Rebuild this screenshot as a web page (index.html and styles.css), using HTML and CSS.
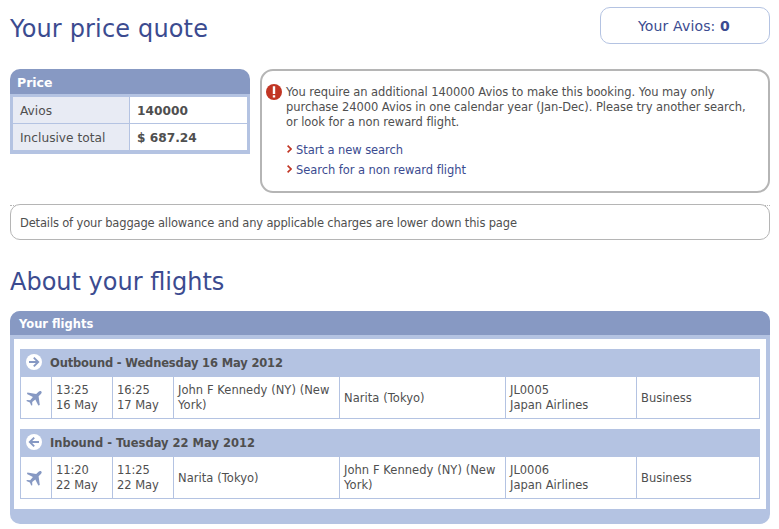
FILE: index.html
```html
<!DOCTYPE html>
<html lang="en">
<head>
<meta charset="UTF-8" />
<meta name="viewport" content="width=device-width, initial-scale=1" />
<title>Your price quote</title>
<link rel="stylesheet" href="styles.css">
</head>
<body>

<header class="page-header">
  <h1>Your price quote</h1>
  <div class="avios-balance"><span>Your Avios: <strong>0</strong></span></div>
</header>

<div class="summary">
  <section class="price-box">
    <h2 class="panel-title">Price</h2>
    <dl class="price-list">
      <dt>Avios</dt>
      <dd>140000</dd>
      <dt>Inclusive total</dt>
      <dd>$ 687.24</dd>
    </dl>
  </section>

  <section class="message-box">
    <svg class="alert-icon" width="16" height="16" viewBox="0 0 16 16">
      <circle cx="8" cy="8" r="8" fill="#c13524" />
      <path d="M6.8 2.200h2.400V10H6.800zM6.800 11.300h2.400v2.200H6.800z" fill="#fff" />
    </svg>
    <div class="message-body">
      <p>You require an additional 140000 Avios to make this booking. You may only<br>
        purchase 24000 Avios in one calendar year (Jan-Dec). Please try another search,<br>
        or look for a non reward flight.</p>
      <ul class="links">
        <li>
          <svg width="5" height="8" viewBox="0 0 5 8"><path d="M.6.6 4 4 .6 7.4" /></svg>
          <a href="#">Start a new search</a>
        </li>
        <li>
          <svg width="5" height="8" viewBox="0 0 5 8"><path d="M.6.6 4 4 .6 7.4" /></svg>
          <a href="#">Search for a non reward flight</a>
        </li>
      </ul>
    </div>
  </section>
</div>

<div class="note-wrap">
  <div class="baggage-note">Details of your baggage allowance and any applicable charges are lower down this page</div>
</div>

<h1 class="section-heading">About your flights</h1>

<section class="flights">
  <h2 class="panel-title">Your flights</h2>
  <div class="flights-body">

    <!-- Outbound -->
    <div class="flight">
      <h3 class="outbound">
        <svg width="16" height="16" viewBox="0 0 16 16">
          <circle cx="8" cy="8" r="8" fill="#fff" />
          <path class="arrow" d="M3 8h9M7.8 3.6 12.2 8l-4.400 4.400" />
        </svg>
        <span>Outbound - Wednesday 16 May 2012</span>
      </h3>
      <div class="flight-row">
        <div class="cell plane">
          <svg width="16" height="16" viewBox="0 0 16 16">
            <path d="M15.300 1.500C14.500.700 13.400 1 12.600 1.700L10.200 4 1.400 2.600 1 4.100 6.900 7 4.200 10.200.9 9.900.400 11 3.900 12.400 5.200 15.600 6.300 15.200 6.200 12 9.300 9.500 12.300 15.400 13.800 14.900 12.600 6.300 14.900 4C15.700 3.200 16 2.200 15.300 1.500z" />
          </svg>
        </div>
        <div class="cell time">13:25<br>16 May</div>
        <div class="cell time">16:25<br>17 May</div>
        <div class="cell place">John F Kennedy (NY) (New<br>York)</div>
        <div class="cell place single">Narita (Tokyo)</div>
        <div class="cell">JL0005<br>Japan Airlines</div>
        <div class="cell single">Business</div>
      </div>
    </div>

    <!-- Inbound -->
    <div class="flight">
      <h3>
        <svg width="16" height="16" viewBox="0 0 16 16">
          <circle cx="8" cy="8" r="8" fill="#fff" />
          <path class="arrow" d="M13 8H4M8.200 3.600 3.800 8l4.400 4.400" />
        </svg>
        <span>Inbound - Tuesday 22 May 2012</span>
      </h3>
      <div class="flight-row">
        <div class="cell plane">
          <svg width="16" height="16" viewBox="0 0 16 16">
            <path d="M15.300 1.500C14.500.700 13.400 1 12.600 1.700L10.200 4 1.400 2.600 1 4.100 6.900 7 4.200 10.200.9 9.900.400 11 3.900 12.400 5.200 15.600 6.300 15.200 6.200 12 9.300 9.500 12.300 15.400 13.800 14.900 12.600 6.300 14.900 4C15.700 3.200 16 2.200 15.300 1.500z" />
          </svg>
        </div>
        <div class="cell time">11:20<br>22 May</div>
        <div class="cell time">11:25<br>22 May</div>
        <div class="cell place single">Narita (Tokyo)</div>
        <div class="cell place">John F Kennedy (NY) (New<br>York)</div>
        <div class="cell">JL0006<br>Japan Airlines</div>
        <div class="cell single">Business</div>
      </div>
    </div>

  </div>
</section>

</body>
</html>
```
FILE: styles.css
```css
* {
  box-sizing: border-box;
}
body {
  margin: 0;
  padding: 7px 9px 5px 10px;
  background: #fff;
  color: #4f4f4f;
  font-family: Verdana, 'DejaVu Sans', sans-serif;
  font-size: 11.5px;
  line-height: 15px;
}
h1, h2, h3, p, ul, dl, dd {
  margin: 0;
  padding: 0;
}
h1 {
  color: #3b4b90;
  font-size: 24px;
  font-weight: 400;
  line-height: 30px;
}

/* Heading and balance */
.page-header {
  display: flex;
  justify-content: space-between;
  height: 62px;
}
.page-header h1 {
  padding-top: 7px;
  letter-spacing: 0.16px;
}
.avios-balance {
  display: flex;
  align-items: center;
  justify-content: center;
  width: 170px;
  height: 37px;
  padding: 2px 2px 0 0;
  border: 1px solid #b4c3e2;
  border-radius: 10px;
  color: #3b4b90;
  font-size: 14px;
  letter-spacing: 0.15px;
}

/* Price and message */
.summary {
  display: flex;
  gap: 10px;
  align-items: flex-start;
}
.panel-title {
  background: #8799c3;
  color: #fff;
  font-weight: 700;
}
.price-box {
  flex: none;
  width: 240px;
  border-radius: 10px 10px 0 0;
  overflow: hidden;
}
.price-box .panel-title {
  height: 25px;
  padding-left: 7px;
  font-size: 12.5px;
  line-height: 28px;
}
.price-list {
  display: grid;
  grid-template-columns: 116px 117px;
  grid-auto-rows: 26px;
  gap: 1px;
  padding: 3px 3px 4px;
  background: #b4c3e2;
  font-size: 12.2px;
  line-height: 28px;
}
.price-list dt {
  padding-left: 7px;
  background: #e8ebf4;
}
.price-list dd {
  padding-left: 7px;
  background: #fff;
  font-weight: 700;
}
.message-box {
  display: flex;
  flex: 1;
  gap: 4px;
  height: 124px;
  padding: 13px 4px;
  border: 2px solid #b5b5b5;
  border-radius: 13px;
}
.message-body {
  padding-top: 1px;
  letter-spacing: -0.06px;
  white-space: nowrap;
}
.links {
  margin-top: 10px;
  list-style: none;
}
.links li {
  display: flex;
  gap: 4px;
  align-items: center;
  height: 20px;
}
.links svg {
  margin: -2px 0 0 1px;
  fill: none;
  stroke: #c13524;
  stroke-width: 1.6;
}
.links a {
  color: #3b4b90;
  text-decoration: none;
}

/* Dotted rule shows behind the rounded corners */
.note-wrap {
  margin-top: 12px;
  border-top: 1px dotted #b5b5b5;
}
.baggage-note {
  position: relative;
  height: 36px;
  margin-top: -2px;
  padding-left: 9px;
  border: 1px solid #b5b5b5;
  border-radius: 10px;
  background: #fff;
  letter-spacing: -0.16px;
  line-height: 36px;
}
.section-heading {
  margin: 27px 0 14px;
}

/* Flight details */
.flights {
  border-radius: 10px;
  overflow: hidden;
  background: #b4c3e2;
}
.flights .panel-title {
  height: 24px;
  padding-left: 9px;
  font-size: 11.5px;
  line-height: 26px;
}
.flights-body {
  display: flex;
  flex-direction: column;
  gap: 10px;
  margin: 4px 4px 15px;
  padding: 10px 6px;
  background: #fff;
}
.flight h3 {
  display: flex;
  gap: 8px;
  align-items: center;
  height: 28px;
  padding-left: 6px;
  background: #b4c3e2;
  font-size: 11.5px;
}
.flight h3.outbound {
  letter-spacing: -0.15px;
}
.flight h3 svg {
  margin-top: -2px;
}
.arrow {
  fill: none;
  stroke: #8799c3;
  stroke-width: 1.9;
}
.flight-row {
  display: grid;
  grid-template-columns: 31px 61px 61px 166px 166px 131px 1fr;
  height: 42px;
  border: solid #b4c3e2;
  border-width: 0 1px 1px 0;
}
.cell {
  align-content: center;
  padding-left: 4px;
  border-left: 1px solid #b4c3e2;
  white-space: nowrap;
}
.single {
  padding-top: 2px;
}
.place {
  letter-spacing: 0.05px;
}
.time {
  letter-spacing: -0.05px;
}
.plane {
  padding-left: 5px;
}
.plane svg {
  display: block;
  fill: #8799c3;
}
```
